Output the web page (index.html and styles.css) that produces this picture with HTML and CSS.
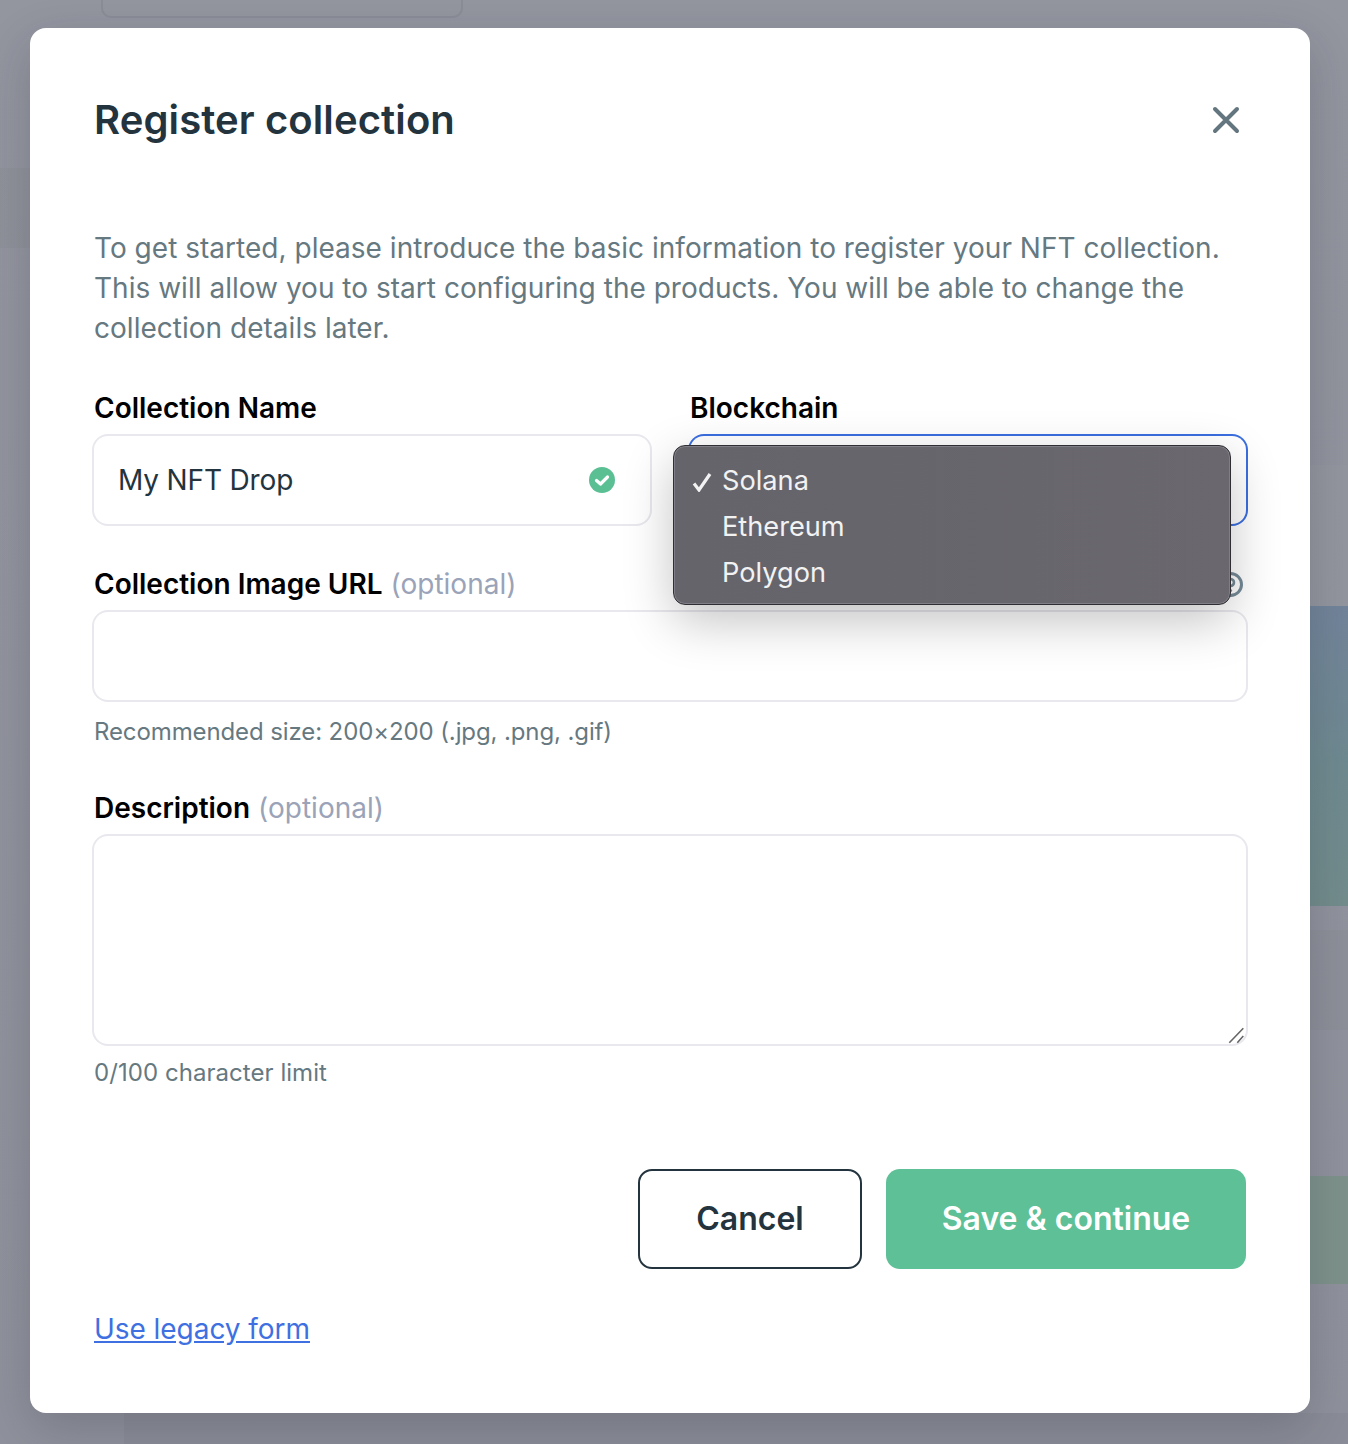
FILE: index.html
```html
<!DOCTYPE html>
<html lang="en">
<head>
<meta charset="UTF-8">
<meta name="viewport" content="width=device-width, initial-scale=1.0">
<title>Register collection</title>
<link rel="stylesheet" href="styles.css">
</head>
<body>
<div class="backdrop">
  <div class="bg-card"></div>
  <div class="bg-band bg-band-left"></div>
  <div class="bg-band bg-band-right"></div>
  <div class="bg-band bg-band-right-low"></div>
  <div class="bg-band bg-band-bottom"></div>
  <div class="bg-image"></div>
  <div class="bg-image-low"></div>
</div>
<div class="modal">
  <div class="modal-header">
    <h1 class="modal-title">Register collection</h1>
    <button class="close-btn" aria-label="Close">
      <svg width="28" height="28" viewBox="0 0 28 28"><path d="M3 3 L25 25 M25 3 L3 25" stroke="#63757e" stroke-width="4" stroke-linecap="round" fill="none"/></svg>
    </button>
  </div>
  <p class="intro">To get started, please introduce the basic information to register your NFT collection. This will allow you to start configuring the products. You will be able to change the collection details later.</p>

  <div class="two-cols">
    <div class="field">
      <label class="label">Collection Name</label>
      <div class="input input-name">
        <span>My NFT Drop</span>
        <svg width="26" height="26" viewBox="0 0 26 26"><circle cx="13" cy="13" r="13" fill="#5bbf94"/><path d="M7.5 13.5 L11.5 17 L18.5 10" stroke="#fff" stroke-width="3.2" stroke-linecap="round" stroke-linejoin="round" fill="none"/></svg>
      </div>
    </div>
    <div class="field">
      <label class="label">Blockchain</label>
      <div class="input input-focus"></div>
    </div>
  </div>

  <div class="field field-image">
    <div class="label-row">
      <label class="label">Collection Image URL <span class="optional">(optional)</span></label>
      <svg class="help" width="25" height="25" viewBox="0 0 25 25"><circle cx="12.5" cy="12.5" r="11" stroke="#748a97" stroke-width="3" fill="none"/><path d="M9 10 A3.5 3.5 0 1 1 12.5 14 L12.5 15" stroke="#748a97" stroke-width="2.6" fill="none"/><circle cx="12.5" cy="18.5" r="1.6" fill="#748a97"/></svg>
    </div>
    <div class="input"></div>
    <div class="hint">Recommended size: 200×200 (.jpg, .png, .gif)</div>
  </div>

  <div class="field field-desc">
    <label class="label">Description <span class="optional">(optional)</span></label>
    <div class="input textarea">
      <svg class="resize" width="16" height="16" viewBox="0 0 16 16"><path d="M-0.7 14.7 L13.3 0.3 M7.3 14.7 L13.3 8" stroke="#666" stroke-width="1.6" fill="none"/></svg>
    </div>
    <div class="hint hint-tight">0/100 character limit</div>
  </div>

  <div class="actions">
    <button class="btn btn-cancel">Cancel</button>
    <button class="btn btn-save">Save &amp; continue</button>
  </div>
  <a class="legacy" href="#">Use legacy form</a>

  <div class="select-menu">
    <div class="select-option"><svg class="tick" width="20" height="20" viewBox="0 0 20 20"><path d="M2 11.5 L7 18 L18 2" stroke="#f2f2f3" stroke-width="3.2" fill="none"/></svg>Solana</div>
    <div class="select-option">Ethereum</div>
    <div class="select-option">Polygon</div>
  </div>
</div>
</body>
</html>
```

FILE: styles.css
```css
* {
  box-sizing: border-box;
}
html, body {
  margin: 0;
  height: 1444px;
  overflow: hidden;
}
body {
  font-family: Inter, "Liberation Sans", sans-serif;
  background-color: #93959f;
  padding: 28px 38px 31px 30px;
}

/* dimmed page behind the modal */
.backdrop {
  position: absolute;
  inset: 0;
  background: linear-gradient(180deg, #93959f 0%, #8f919c 100%);
}
.bg-card {
  position: absolute;
  left: 101px;
  top: -20px;
  width: 362px;
  height: 38px;
  border: 2px solid #8a8c96;
  border-radius: 10px;
}
.bg-band {
  position: absolute;
  background-color: rgba(0,0,0,0.02);
}
.bg-band-left {
  left: 0;
  top: 168px;
  width: 30px;
  height: 80px;
}
.bg-band-right {
  left: 1310px;
  top: 465px;
  width: 38px;
  height: 141px;
  background-color: rgba(255,255,255,0.02);
}
.bg-band-right-low {
  left: 1310px;
  top: 930px;
  width: 38px;
  height: 100px;
}
.bg-band-bottom {
  left: 124px;
  top: 1413px;
  right: 0;
  bottom: 0;
  background-color: rgba(0,0,0,0.03);
}
.bg-image {
  position: absolute;
  left: 1310px;
  top: 606px;
  width: 38px;
  height: 300px;
  background: linear-gradient(180deg, #72849a 0%, #6f8a90 55%, #738c8c 100%);
}
.bg-image-low {
  position: absolute;
  left: 1310px;
  top: 1176px;
  width: 38px;
  height: 108px;
  background-color: #7e928b;
}

.modal {
  position: relative;
  width: 1280px;
  height: 1385px;
  padding: 64px;
  background-color: #fff;
  border-radius: 16px;
  box-shadow: 0 16px 48px rgba(30,35,45,0.2);
}
.modal-header {
  display: flex;
  justify-content: space-between;
  align-items: center;
  height: 56px;
}
.modal-title {
  margin: 0;
  padding-bottom: 2px;
  font-size: 40px;
  letter-spacing: 0.1px;
  font-weight: 600;
  color: #24343e;
}
.close-btn {
  padding: 0;
  border: none;
  background: none;
  display: flex;
  margin-right: 6px;
}
.intro {
  margin: 80px 0 0;
  font-size: 28px;
  line-height: 40px;
  letter-spacing: 0.02px;
  color: #667880;
}
.two-cols {
  display: grid;
  grid-template-columns: 1fr 1fr;
  gap: 40px;
  margin-top: 40px;
}
.label {
  display: block;
  font-size: 28px;
  line-height: 40px;
  font-weight: 600;
  color: #000;
  margin-bottom: 8px;
}
.optional {
  font-weight: 400;
  color: #9aa3b8;
  margin-left: 1px;
}
.input {
  height: 88px;
  border-radius: 14px;
  box-shadow: 0 0 0 2px #e8e8ee;
  font-size: 28px;
  letter-spacing: -0.15px;
  color: #24343e;
  background-color: #fff;
}
.input-name {
  display: flex;
  align-items: center;
  justify-content: space-between;
  padding: 0 35px 0 24px;
}
.input-focus {
  box-shadow: 0 0 0 2px #3a6ee0;
}
.field-image {
  margin-top: 40px;
}
.label-row {
  display: flex;
  justify-content: space-between;
  align-items: flex-start;
}
.help {
  margin-top: 8px;
  margin-right: 3px;
}
.hint {
  margin-top: 14px;
  font-size: 24px;
  line-height: 36px;
  letter-spacing: -0.11px;
  color: #667880;
}
.hint-tight {
  margin-top: 11px;
  letter-spacing: 0.05px;
}
.field-desc {
  margin-top: 38px;
}
.textarea {
  position: relative;
  height: 208px;
}
.resize {
  position: absolute;
  right: 0;
  bottom: 0;
  overflow: visible;
}
.actions {
  display: flex;
  justify-content: flex-end;
  gap: 24px;
  margin-top: 78px;
}
.btn {
  height: 100px;
  padding: 0 0 2px;
  font-family: inherit;
  font-size: 32px;
  font-weight: 600;
  border-radius: 14px;
}
.btn-cancel {
  width: 224px;
  background-color: #fff;
  color: #24343e;
  border: 2px solid #24343e;
}
.btn-save {
  width: 360px;
  background-color: #5dc096;
  color: #fff;
  border: none;
}
.legacy {
  display: inline-block;
  margin-top: 40px;
  font-size: 28px;
  line-height: 40px;
  letter-spacing: -0.05px;
  color: #3e70e2;
}

/* native select popup, open over the form */
.select-menu {
  position: absolute;
  left: 643px;
  top: 417px;
  width: 558px;
  height: 160px;
  padding: 13.5px 0 0;
  background: linear-gradient(90deg, #65646b 0%, #6a676e 100%);
  border: 1.5px solid #2f2e33;
  border-radius: 12px;
  box-shadow: inset 0 0 0 1px #807e87, 0 16px 50px rgba(0,0,0,0.24);
}
.select-option {
  position: relative;
  height: 46px;
  line-height: 42px;
  padding-left: 48px;
  font-size: 27.2px;
  color: #f2f2f3;
}
.tick {
  position: absolute;
  left: 18px;
  top: 12px;
}
```
